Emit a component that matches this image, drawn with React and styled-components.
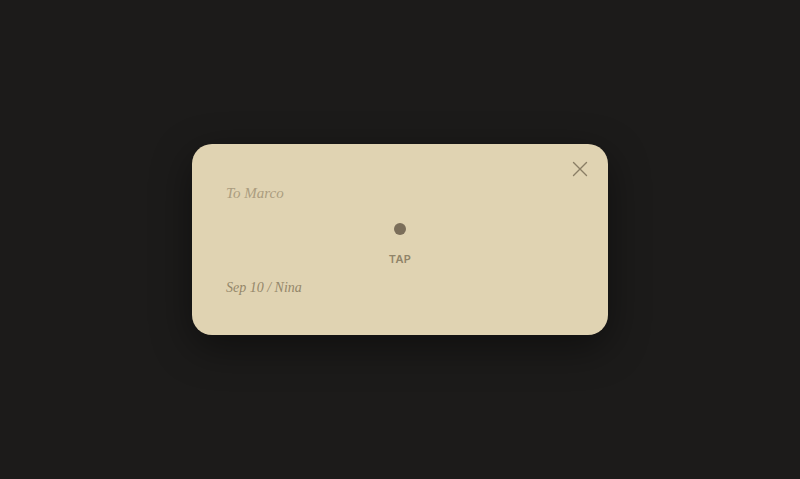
import React from "react";
import styled, { createGlobalStyle } from "styled-components";

const GlobalStyle = createGlobalStyle`
  html, body {
    margin: 0;
    padding: 0;
    height: 100%;
    background: #1c1b1a;
  }

  #root {
    min-height: 100vh;
  }
`;

const Page = styled.div`
  min-height: 100vh;
  display: flex;
  align-items: center;
  justify-content: center;
`;

const Card = styled.div`
  position: relative;
  box-sizing: border-box;
  width: 416px;
  height: 191px;
  margin-top: -1px;
  padding: 39px 34px 0 34px;
  background: #e0d3b2;
  border-radius: 20px;
  box-shadow: 0 12px 40px rgba(0, 0, 0, 0.45);
  display: flex;
  flex-direction: column;
`;

const CloseButton = styled.button`
  position: absolute;
  top: 11px;
  right: 14px;
  width: 28px;
  height: 28px;
  padding: 0;
  border: none;
  background: transparent;
  display: flex;
  align-items: center;
  justify-content: center;
  cursor: pointer;
`;

const Title = styled.div`
  font-family: "Liberation Serif", serif;
  font-style: italic;
  font-size: 15px;
  line-height: 20px;
  color: #ab9d7f;
`;

const Center = styled.div`
  display: flex;
  flex-direction: column;
  align-items: center;
  margin-top: 20px;
`;

const Dot = styled.div`
  width: 12px;
  height: 12px;
  border-radius: 50%;
  background: #7b6e5a;
`;

const TapLabel = styled.div`
  margin-top: 17px;
  font-family: Inter, "Liberation Sans", sans-serif;
  font-size: 11px;
  line-height: 14px;
  font-weight: 600;
  letter-spacing: 0.4px;
  color: #908469;
`;

const Footer = styled.div`
  margin-top: 13px;
  font-family: "Liberation Serif", serif;
  font-style: italic;
  font-size: 14px;
  line-height: 18px;
  color: #94876a;
`;

const NoteCard = () => (
  <Card>
    <CloseButton aria-label="Close">
      <svg width="16" height="16" viewBox="0 0 16 16" fill="none">
        <path d="M1.5 1.5 L14.5 14.5 M14.5 1.5 L1.5 14.5" stroke="#8a7e65" strokeWidth="1.4" strokeLinecap="round" />
      </svg>
    </CloseButton>
    <Title>To Marco</Title>
    <Center>
      <Dot />
      <TapLabel>TAP</TapLabel>
    </Center>
    <Footer>Sep 10 / Nina</Footer>
  </Card>
);

const App = () => (
  <>
    <GlobalStyle />
    <Page>
      <NoteCard />
    </Page>
  </>
);

export default App;
